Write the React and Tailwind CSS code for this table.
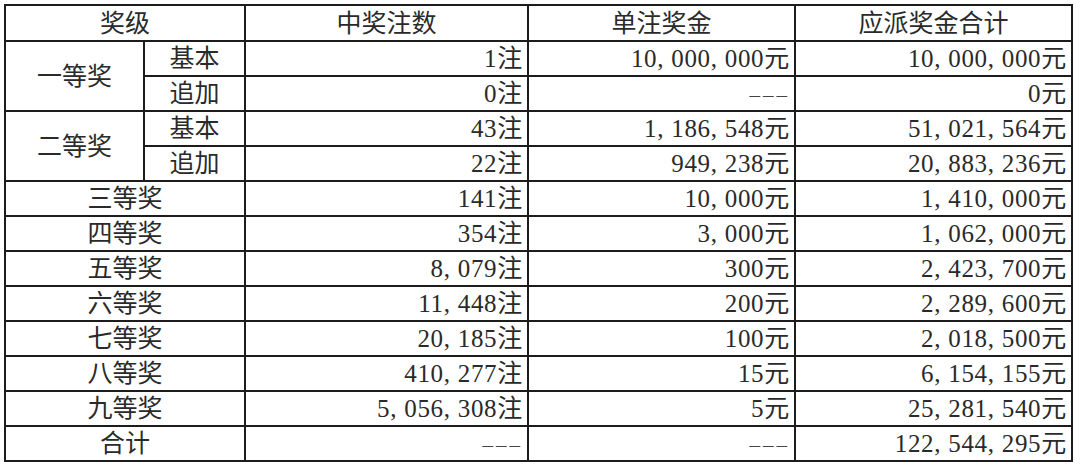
import React from "react";

const fmt = (s) => s.replace(/,/g, ", ");

const rows = [
  { a: "一等奖", span: 2, b: "基本", c: "1注", d: "10,000,000元", e: "10,000,000元" },
  { b: "追加", c: "0注", d: "---", e: "0元" },
  { a: "二等奖", span: 2, b: "基本", c: "43注", d: "1,186,548元", e: "51,021,564元" },
  { b: "追加", c: "22注", d: "949,238元", e: "20,883,236元" },
  { a: "三等奖", c: "141注", d: "10,000元", e: "1,410,000元" },
  { a: "四等奖", c: "354注", d: "3,000元", e: "1,062,000元" },
  { a: "五等奖", c: "8,079注", d: "300元", e: "2,423,700元" },
  { a: "六等奖", c: "11,448注", d: "200元", e: "2,289,600元" },
  { a: "七等奖", c: "20,185注", d: "100元", e: "2,018,500元" },
  { a: "八等奖", c: "410,277注", d: "15元", e: "6,154,155元" },
  { a: "九等奖", c: "5,056,308注", d: "5元", e: "25,281,540元" },
  { a: "合计", c: "---", d: "---", e: "122,544,295元" },
];

const cell = "border-2 border-[#1c1c1c] p-0 h-[35px] leading-none";

function Num({ v }) {
  if (v === "---") {
    return <span className="text-[21px] tracking-[3px] text-[#444]">–––</span>;
  }
  return <span className="tracking-[0.7px]">{fmt(v)}</span>;
}

export default function App() {
  return (
    <div
      className="bg-white w-[1080px] h-[467px] pt-[4px] pl-[4px] text-[#2a2a2a] text-[25px]"
      style={{ fontFamily: '"Liberation Serif", "Noto Sans CJK SC", serif' }}
    >
      <table className="border-collapse table-fixed w-[1069px]">
        <colgroup>
          <col className="w-[139px]" />
          <col className="w-[101px]" />
          <col className="w-[283px]" />
          <col className="w-[267px]" />
          <col className="w-[277px]" />
        </colgroup>
        <thead>
          <tr>
            <th colSpan={2} className={`${cell} h-[36px] font-normal text-center`}>奖级</th>
            <th className={`${cell} h-[36px] font-normal text-center`}>中奖注数</th>
            <th className={`${cell} h-[36px] font-normal text-center`}>单注奖金</th>
            <th className={`${cell} h-[36px] font-normal text-center`}>应派奖金合计</th>
          </tr>
        </thead>
        <tbody>
          {rows.map((r, i) => (
            <tr key={i}>
              {r.a && r.span ? (
                <td rowSpan={2} className={`${cell} text-center`}>{r.a}</td>
              ) : null}
              {r.a && !r.span ? (
                <td colSpan={2} className={`${cell} text-center`}>{r.a}</td>
              ) : null}
              {r.b ? <td className={`${cell} text-center`}>{r.b}</td> : null}
              <td className={`${cell} text-right pr-[4px]`}><Num v={r.c} /></td>
              <td className={`${cell} text-right pr-[4px]`}><Num v={r.d} /></td>
              <td className={`${cell} text-right pr-[4px]`}><Num v={r.e} /></td>
            </tr>
          ))}
        </tbody>
      </table>
    </div>
  );
}
